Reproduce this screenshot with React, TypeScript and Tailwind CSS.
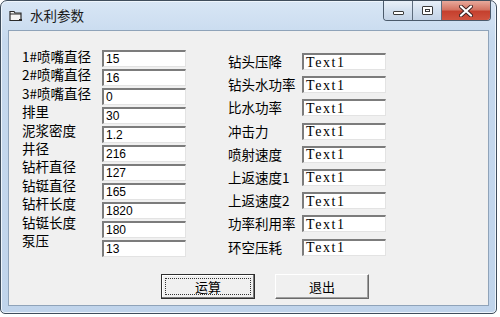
import React from "react";

// --- DADOS DO FORMULÁRIO ---
const ENTRADAS: { rotulo: string; valor: string }[] = [
  { rotulo: "1#喷嘴直径", valor: "15" },
  { rotulo: "2#喷嘴直径", valor: "16" },
  { rotulo: "3#喷嘴直径", valor: "0" },
  { rotulo: "排里", valor: "30" },
  { rotulo: "泥浆密度", valor: "1.2" },
  { rotulo: "井径", valor: "216" },
  { rotulo: "钻杆直径", valor: "127" },
  { rotulo: "钻铤直径", valor: "165" },
  { rotulo: "钻杆长度", valor: "1820" },
  { rotulo: "钻铤长度", valor: "180" },
  { rotulo: "泵压", valor: "13" },
];

const SAIDAS = [
  "钻头压降",
  "钻头水功率",
  "比水功率",
  "冲击力",
  "喷射速度",
  "上返速度1",
  "上返速度2",
  "功率利用率",
  "环空压耗",
];

const cjk = { fontFamily: '"Noto Sans CJK SC", "Noto Sans", sans-serif' };

const CaixaTexto: React.FC<{ children: React.ReactNode; mono?: boolean }> = ({ children, mono }) => (
  <div
    className={
      "w-[84px] h-[17px] bg-white border-t-2 border-l-2 border-t-[#7c7c7c] border-l-[#7c7c7c] border-r border-b border-r-[#e3e3e3] border-b-[#e3e3e3] pl-[2px] flex items-center text-black " +
      (mono ? "text-[14px] leading-[15px] tracking-[1.6px]" : "text-[12px] leading-[15px]")
    }
    style={{ fontFamily: mono ? '"Liberation Serif", serif' : '"Liberation Sans", sans-serif' }}
  >
    {children}
  </div>
);

const Botao: React.FC<{ children: React.ReactNode; padrao?: boolean }> = ({ children, padrao }) => (
  <button
    className={
      "w-[94px] h-[25px] bg-[#f0f0f0] text-[13px] text-black flex items-center justify-center " +
      (padrao
        ? "border border-[#2e2e2e] shadow-[inset_-1px_-1px_0_#7a7a7a,inset_1px_1px_0_#ffffff]"
        : "border border-t-white border-l-white border-r-[#6a6a6a] border-b-[#6a6a6a] shadow-[inset_-1px_-1px_0_#a0a0a0]")
    }
    style={cjk}
  >
    {padrao ? (
      <span className="w-[86px] h-[17px] border border-dotted border-[#333] flex items-center justify-center leading-none">
        {children}
      </span>
    ) : (
      children
    )}
  </button>
);

const App: React.FC = () => {
  return (
    <div className="w-[500px] h-[317px] bg-white overflow-hidden">
      {/* JANELA */}
      <div className="w-[497px] h-[314px] rounded-t-[7px] rounded-b-[5px] border border-[#3f4d5c] bg-[linear-gradient(to_bottom,#d8e6f5,#c6d9ee_40px,#c0d4eb)] shadow-[inset_0_0_0_1px_#eef5fc] flex flex-col">
        {/* BARRA DE TÍTULO */}
        <div className="h-[29px] flex items-start justify-between pl-[8px] pr-[5px]">
          <div className="flex items-center gap-[7px] h-[28px]">
            <svg width="14" height="13" viewBox="0 0 14 13">
              <path d="M1 2.5h4l1 1.5h6v7.5H1z" fill="#f4f4f4" stroke="#2a2a2a" strokeWidth="1.2" />
              <path d="M1 5h11" stroke="#2a2a2a" strokeWidth="1" />
              <rect x="10" y="10" width="3" height="2" fill="#2a2a2a" />
            </svg>
            <span className="text-[13.5px] text-[#1b1b1b]" style={cjk}>
              水利参数
            </span>
          </div>
          <div className="flex h-[20px] border border-t-0 border-[#4b5a6b] rounded-b-[4px] overflow-hidden">
            <div className="w-[29px] h-full bg-[linear-gradient(to_bottom,#e9f0f8,#d3e0ef_50%,#c3d3e6)] border-r border-[#5d6c7d] flex items-end justify-center pb-[5px]">
              <div className="w-[11px] h-[4px] bg-white border border-[#3b3b3b] rounded-[1px]" />
            </div>
            <div className="w-[29px] h-full bg-[linear-gradient(to_bottom,#e9f0f8,#d3e0ef_50%,#c3d3e6)] border-r border-[#5d6c7d] flex items-center justify-center">
              <div className="w-[11px] h-[9px] bg-white border border-[#3b3b3b] rounded-[1px] flex items-center justify-center">
                <div className="w-[5px] h-[3px] border border-[#3b3b3b]" />
              </div>
            </div>
            <div className="w-[48px] h-full bg-[linear-gradient(to_bottom,#e8a99b,#d47564_45%,#c5402e_55%,#d0533f)] flex items-center justify-center">
              <svg width="14" height="12" viewBox="0 0 14 12">
                <path d="M2 1.5l10 9M12 1.5l-10 9" stroke="#3b2020" strokeWidth="4" strokeLinecap="round" />
                <path d="M2 1.5l10 9M12 1.5l-10 9" stroke="#ffffff" strokeWidth="2.2" strokeLinecap="round" />
              </svg>
            </div>
          </div>
        </div>

        {/* ÁREA DO CLIENTE */}
        <div className="flex-1 mx-[7px] mb-[7px] bg-[#f0f0f0] border border-[#8fa3b9] flex flex-col" style={cjk}>
          <div className="flex pt-[16px] pl-[13px]">
            {/* COLUNA ESQUERDA */}
            <div className="flex">
              <div className="w-[80px] flex flex-col text-[13.5px] leading-[18.4px] text-black">
                {ENTRADAS.map((e) => (
                  <span key={e.rotulo} className="whitespace-nowrap">
                    {e.rotulo}
                  </span>
                ))}
              </div>
              <div className="flex flex-col gap-[2px] pt-[3px]">
                {ENTRADAS.map((e) => (
                  <CaixaTexto key={e.rotulo}>{e.valor}</CaixaTexto>
                ))}
              </div>
            </div>

            {/* COLUNA DIREITA */}
            <div className="flex flex-col gap-[6.2px] pt-[6px] ml-[42px]">
              {SAIDAS.map((s) => (
                <div key={s} className="flex items-center">
                  <span className="w-[74px] text-[13.5px] leading-[17px] text-black whitespace-nowrap">{s}</span>
                  <CaixaTexto mono>Text1</CaixaTexto>
                </div>
              ))}
            </div>
          </div>

          {/* BOTÕES */}
          <div className="flex gap-[20px] mt-[17px] pl-[152px]">
            <Botao padrao>运算</Botao>
            <Botao>退出</Botao>
          </div>
        </div>
      </div>
    </div>
  );
};

export default App;
